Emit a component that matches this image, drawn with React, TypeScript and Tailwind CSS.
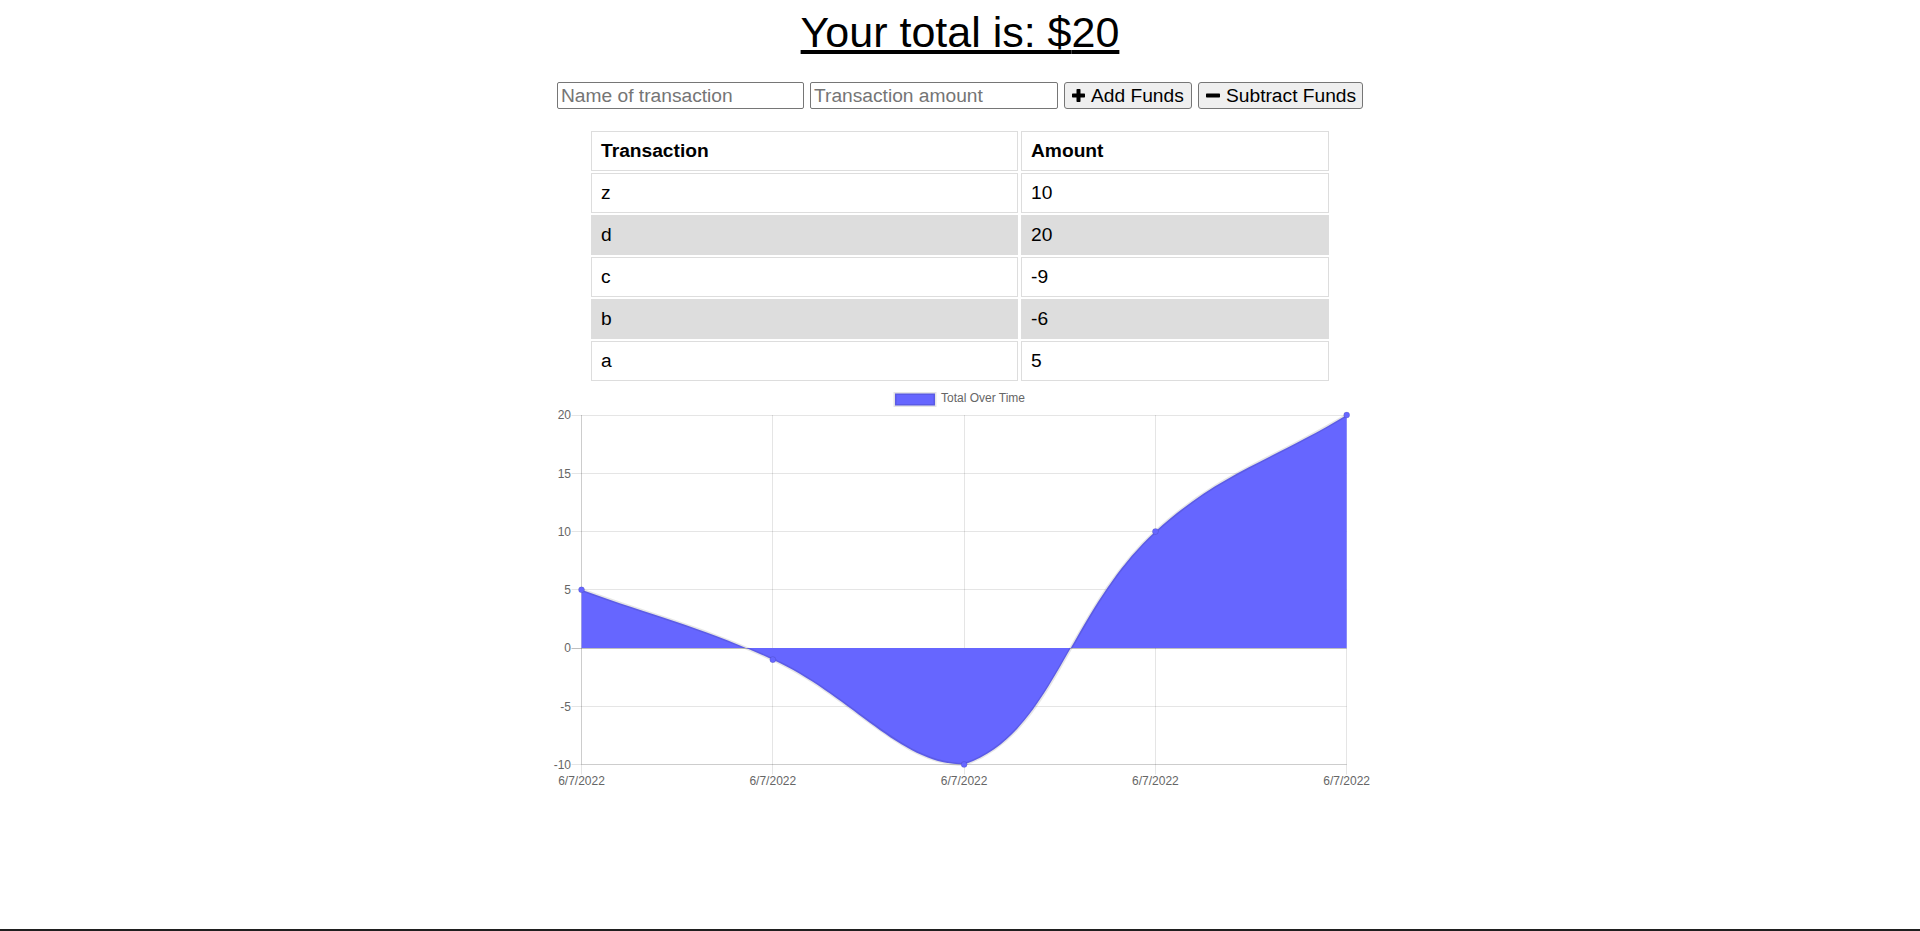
import React from "react";

type Pt = { x: number; y: number };

const rows = [
  { name: "z", amount: "10" },
  { name: "d", amount: "20" },
  { name: "c", amount: "-9" },
  { name: "b", amount: "-6" },
  { name: "a", amount: "5" },
];

const values = [5, -1, -10, 10, 20];

const LEFT = 41.5;
const RIGHT = 806.7;
const TOP = 32;
const BOTTOM = 381.5;
const STEP_X = (RIGHT - LEFT) / 4;
const PER_UNIT = (BOTTOM - TOP) / 30;
const yOf = (v: number) => TOP + (20 - v) * PER_UNIT;
const al = (v: number) => Math.floor(v) + 0.5;

function buildPath() {
  const pts: Pt[] = values.map((v, i) => ({ x: LEFT + i * STEP_X, y: yOf(v) }));
  const t = 0.4;
  const cps = pts.map((cur, i) => {
    const prev = pts[i - 1] ?? cur;
    const next = pts[i + 1] ?? cur;
    const d01 = Math.hypot(cur.x - prev.x, cur.y - prev.y);
    const d12 = Math.hypot(next.x - cur.x, next.y - cur.y);
    let s01 = d01 / (d01 + d12);
    let s12 = d12 / (d01 + d12);
    if (isNaN(s01)) s01 = 0;
    if (isNaN(s12)) s12 = 0;
    const fa = t * s01;
    const fb = t * s12;
    const cap = (p: Pt): Pt => ({
      x: Math.max(Math.min(p.x, RIGHT), LEFT),
      y: Math.max(Math.min(p.y, BOTTOM), TOP),
    });
    return {
      prev: cap({ x: cur.x - fa * (next.x - prev.x), y: cur.y - fa * (next.y - prev.y) }),
      next: cap({ x: cur.x + fb * (next.x - prev.x), y: cur.y + fb * (next.y - prev.y) }),
    };
  });
  let d = `M ${pts[0].x} ${pts[0].y}`;
  for (let i = 1; i < pts.length; i++) {
    const c1 = cps[i - 1].next;
    const c2 = cps[i].prev;
    d += ` C ${c1.x} ${c1.y} ${c2.x} ${c2.y} ${pts[i].x} ${pts[i].y}`;
  }
  return { d, pts };
}

function Chart() {
  const { d, pts } = buildPath();
  const zeroY = yOf(0);
  const fillD = `${d} L ${pts[pts.length - 1].x} ${zeroY} L ${pts[0].x} ${zeroY} Z`;
  const ticks = [20, 15, 10, 5, 0, -5, -10];
  const grid = "rgba(0,0,0,0.1)";
  return (
    <svg width={840} height={417} viewBox="0 0 840 417" className="block" style={{ fontFamily: "'Liberation Sans', Arial, sans-serif" }}>
      {/* legend */}
      <rect x={355} y={10.5} width={40} height={12} fill="#6666ff" stroke={grid} strokeWidth={3} />
      <text x={401} y={19.3} fontSize={12} fill="#666">
        Total Over Time
      </text>
      {/* horizontal grid */}
      {ticks.map((v) => (
        <line
          key={v}
          x1={LEFT - 10}
          x2={RIGHT}
          y1={al(yOf(v))}
          y2={al(yOf(v))}
          stroke={v === 0 ? "rgba(0,0,0,0.25)" : grid}
          strokeWidth={1}
        />
      ))}
      {/* vertical grid */}
      {pts.map((p, i) => (
        <line key={i} x1={al(p.x)} x2={al(p.x)} y1={TOP} y2={BOTTOM + 10} stroke={grid} strokeWidth={1} />
      ))}
      {/* axis borders */}
      <line x1={al(LEFT)} x2={al(LEFT)} y1={TOP} y2={BOTTOM} stroke={grid} strokeWidth={1} />
      <line x1={LEFT} x2={RIGHT} y1={al(BOTTOM)} y2={al(BOTTOM)} stroke={grid} strokeWidth={1} />
      {/* y labels */}
      {ticks.map((v) => (
        <text key={v} x={31} y={yOf(v) + 4.3} fontSize={12} fill="#666" textAnchor="end">
          {v}
        </text>
      ))}
      {/* x labels */}
      {pts.map((p, i) => (
        <text key={i} x={p.x} y={402} fontSize={12} fill="#666" textAnchor="middle">
          6/7/2022
        </text>
      ))}
      {/* area */}
      <path d={fillD} fill="#6666ff" />
      <path d={d} fill="none" stroke={grid} strokeWidth={3} />
      {pts.map((p, i) => (
        <circle key={i} cx={p.x} cy={p.y} r={3} fill="#6666ff" stroke={grid} strokeWidth={1} />
      ))}
    </svg>
  );
}

function PlusIcon() {
  return (
    <svg width={13} height={13} viewBox="0 0 13 13" className="shrink-0">
      <rect x={0} y={4.5} width={13} height={4} rx={0.7} fill="#000" />
      <rect x={4.5} y={0} width={4} height={13} rx={0.7} fill="#000" />
    </svg>
  );
}

function MinusIcon() {
  return (
    <svg width={14} height={13} viewBox="0 0 14 13" className="shrink-0">
      <rect x={0} y={4.5} width={14} height={4} rx={0.7} fill="#000" />
    </svg>
  );
}

export default function App() {
  return (
    <div className="min-h-[931px] flex flex-col bg-white text-black font-['Liberation_Sans',Arial,sans-serif]">
      <div className="flex-1 flex flex-col items-center">
        <h1 className="mt-[8px] h-[49px] text-[43px] leading-[49px] font-normal underline">
          Your total is: $<span>20</span>
        </h1>
        <div className="mt-[25px] flex gap-[6px] h-[27px]">
          <input
            type="text"
            placeholder="Name of transaction"
            className="w-[247px] h-[27px] border border-[#767676] rounded-[2px] px-[3px] py-[1px] text-[19.2px] leading-[22px] placeholder:text-[#757575] bg-white"
          />
          <input
            type="number"
            placeholder="Transaction amount"
            className="w-[248px] h-[27px] border border-[#767676] rounded-[2px] px-[3px] py-[1px] text-[19.2px] leading-[22px] placeholder:text-[#757575] bg-white"
          />
          <button className="w-[128px] h-[27px] flex items-center gap-[6px] pl-[7px] bg-[#efefef] border border-[#767676] rounded-[3px] text-[19.2px] leading-[22px] whitespace-nowrap">
            <PlusIcon />
            <span>Add Funds</span>
          </button>
          <button className="w-[165px] h-[27px] flex items-center gap-[6px] pl-[7px] bg-[#efefef] border border-[#767676] rounded-[3px] text-[19.2px] leading-[22px] whitespace-nowrap">
            <MinusIcon />
            <span>Subtract Funds</span>
          </button>
        </div>
        <table className="mt-[20px] border-separate border-spacing-x-[3px] border-spacing-y-[2px] text-[19.2px] leading-[22px]">
          <thead>
            <tr>
              <th className="w-[427px] border border-[#dddddd] px-[9px] py-[8px] text-left font-bold">Transaction</th>
              <th className="w-[308px] border border-[#dddddd] px-[9px] py-[8px] text-left font-bold">Amount</th>
            </tr>
          </thead>
          <tbody>
            {rows.map((r, i) => (
              <tr key={r.name} className={i % 2 === 1 ? "bg-[#dddddd]" : ""}>
                <td className="border border-[#dddddd] px-[9px] py-[8px]">{r.name}</td>
                <td className="border border-[#dddddd] px-[9px] py-[8px]">{r.amount}</td>
              </tr>
            ))}
          </tbody>
        </table>
        <Chart />
      </div>
      <div className="h-[2px] bg-[#1f1f1f]" />
    </div>
  );
}
